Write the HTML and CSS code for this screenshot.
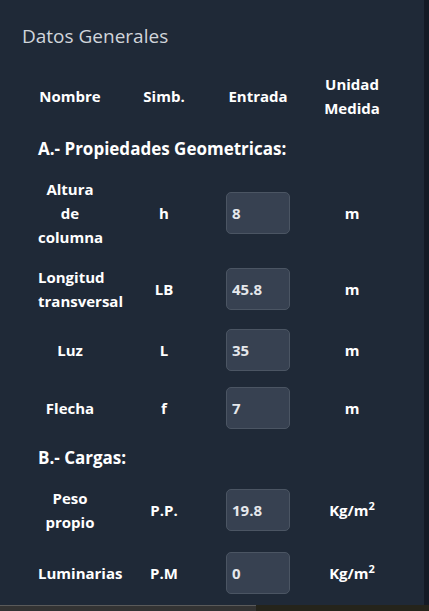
FILE: index.html
```html
<!DOCTYPE html>
<html lang="es">

<head>
     <meta charset="UTF-8">
     <meta name="viewport" content="width=device-width, initial-scale=1.0">
     <title>Datos Generales</title>
     <link rel="stylesheet" href="styles.css">
</head>

<body>
     <div class="page">
          <section class="panel">
               <h2 class="panel-title">Datos Generales</h2>
               <table class="datos">
                    <thead>
                         <tr>
                              <th>Nombre</th>
                              <th>Simb.</th>
                              <th>Entrada</th>
                              <th>Unidad Medida</th>
                         </tr>
                    </thead>
                    <tbody>
                         <tr class="grupo">
                              <td colspan="4">A.- Propiedades Geometricas:</td>
                         </tr>
                         <tr>
                              <td>Altura de columna</td>
                              <td>h</td>
                              <td><input class="entrada" type="text" value="8"></td>
                              <td>m</td>
                         </tr>
                         <tr>
                              <td>Longitud transversal</td>
                              <td>LB</td>
                              <td><input class="entrada" type="text" value="45.8"></td>
                              <td>m</td>
                         </tr>
                         <tr>
                              <td>Luz</td>
                              <td>L</td>
                              <td><input class="entrada" type="text" value="35"></td>
                              <td>m</td>
                         </tr>
                         <tr>
                              <td>Flecha</td>
                              <td>f</td>
                              <td><input class="entrada" type="text" value="7"></td>
                              <td>m</td>
                         </tr>
                         <tr class="grupo">
                              <td colspan="4">B.- Cargas:</td>
                         </tr>
                         <tr>
                              <td>Peso propio</td>
                              <td>P.P.</td>
                              <td><input class="entrada" type="text" value="19.8"></td>
                              <td>Kg/m<sup>2</sup></td>
                         </tr>
                         <tr class="ultima">
                              <td>Luminarias</td>
                              <td>P.M</td>
                              <td><input class="entrada" type="text" value="0"></td>
                              <td>Kg/m<sup>2</sup></td>
                         </tr>
                    </tbody>
               </table>
          </section>
          <div class="scroll-strip"></div>
     </div>
     <div class="bottom-bar">
          <div class="bottom-left"></div>
          <div class="bottom-right"></div>
     </div>
</body>

</html>
```

FILE: styles.css
```css
body {
     margin: 0;
     padding: 0;
     background-color: #161d29;
     font-family: "Open Sans", "Noto Sans", sans-serif;
     color: #fff;
     overflow: hidden;
}

.page {
     display: flex;
     height: 605px;
}

.panel {
     width: 424px;
     background-color: #1f2937;
     padding: 22px 0 0 22px;
     box-sizing: border-box;
}

.scroll-strip {
     flex: 1;
     background-color: #141a25;
}

.panel-title {
     margin: 0;
     font-size: 19px;
     font-weight: 500;
     color: #d1d5db;
     line-height: 28px;
}

.datos {
     margin-top: 14px;
     margin-left: 1px;
     border-collapse: collapse;
     table-layout: fixed;
     width: 376px;
}

.datos th,
.datos td {
     width: 94px;
     padding: 8px 15px;
     box-sizing: border-box;
     text-align: center;
     font-size: 15px;
     font-weight: 700;
     line-height: 24px;
}

.datos .grupo td {
     text-align: left;
     font-size: 17px;
     padding: 9px 15px 8px;
}

.datos .ultima td {
     padding-top: 10px;
}

.datos sup {
     font-size: 11px;
     line-height: 0;
}

.entrada {
     width: 64px;
     height: 42px;
     box-sizing: border-box;
     display: block;
     margin: 0 auto;
     padding: 0 5px;
     background-color: #374151;
     border: 1px solid #4b5563;
     border-radius: 5px;
     color: #e5e7eb;
     font-family: inherit;
     font-size: 15px;
     font-weight: 700;
}

.bottom-bar {
     display: flex;
     height: 6px;
}

.bottom-left {
     width: 256px;
     background-color: #333;
     border-top: 1px solid #5a5a5a;
}

.bottom-right {
     flex: 1;
     background-color: #25241b;
}
```
